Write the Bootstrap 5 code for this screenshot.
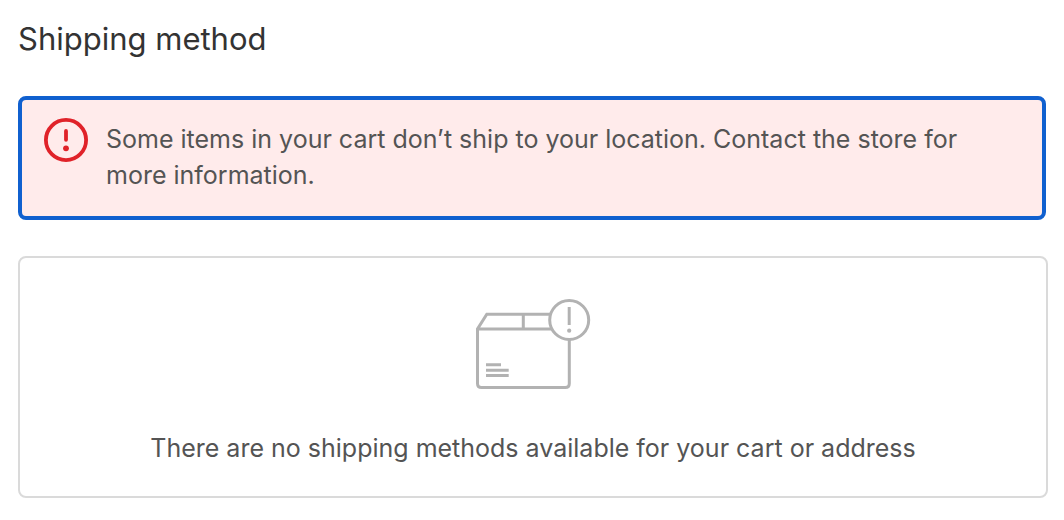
<!DOCTYPE html>
<html lang="en">
<head>
<meta charset="utf-8">
<meta name="viewport" content="width=device-width, initial-scale=1">
<title>Shipping method</title>
<link href="https://cdn.jsdelivr.net/npm/bootstrap@5.3.0/dist/css/bootstrap.min.css" rel="stylesheet">
<style>
body{font-family:Inter,"Liberation Sans",sans-serif;color:#545454;font-size:25px;line-height:36px}
.checkout{padding:18px 16px 22px 18px}
.section-title{font-size:31px;line-height:42px;font-weight:400;color:#333;margin-bottom:36px}
.notice{border:4px solid #1060cf;border-radius:8px;background:#ffebeb;padding:18px 22px 23px;margin:0 2px 36px 0;gap:18px}
.notice-text{padding-top:3px}
.empty-state{border:2px solid #dadada;border-radius:8px;padding:38px 24px 30px;gap:38px}
</style>
</head>
<body>
<main class="checkout">
<h2 class="section-title">Shipping method</h2>
<div class="notice d-flex align-items-start" role="alert" tabindex="-1">
<svg class="flex-shrink-0" width="44" height="44" viewBox="0 0 44 44" fill="none" stroke="#e02229" aria-hidden="true"><circle cx="22" cy="22" r="20.100" stroke-width="3.800"/><path d="M22 13v8.800" stroke-width="3.800" stroke-linecap="round"/><circle cx="22" cy="30.300" r="2.900" fill="#e02229" stroke="none"/></svg>
<div class="notice-text">Some items in your cart don’t ship to your location. Contact the store for more information.</div>
</div>
<section class="empty-state d-flex flex-column align-items-center text-center">
<svg width="116" height="96" viewBox="475 296 116 96" fill="none" stroke="#b2b2b2" stroke-width="3" aria-hidden="true"><path d="M550 314.300H486.800L477.500 329V383.500q0 4 4 4H565.300q4 0 4-4V340M477.500 329H552M523.300 314v15"/><path d="M486 364.700h15M486 370.200h22.700M486 375.500h22.700"/><circle cx="569.200" cy="320" r="19.500"/><path d="M569.200 307v18"/><circle cx="569.200" cy="330.700" r="2.100" fill="#b2b2b2" stroke="none"/></svg>
<p class="mb-0">There are no shipping methods available for your cart or address</p>
</section>
</main>
<script src="https://cdn.jsdelivr.net/npm/bootstrap@5.3.0/dist/js/bootstrap.bundle.min.js"></script>
</body>
</html>
